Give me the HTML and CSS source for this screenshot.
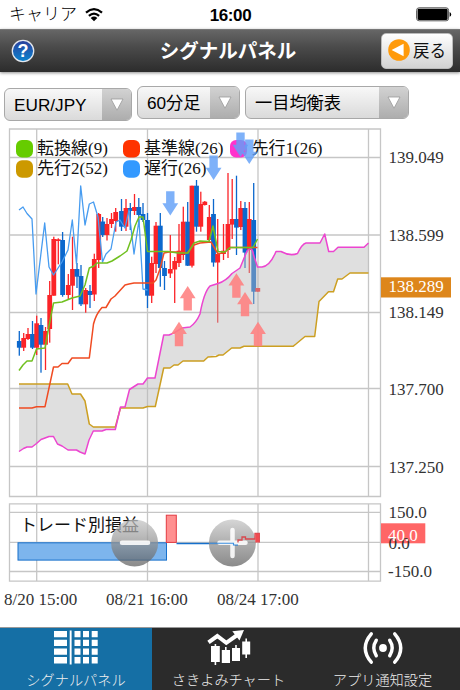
FILE: index.html
```html
<!DOCTYPE html>
<html lang="ja">
<head>
    <meta charset="UTF-8">
    <meta name="viewport" content="width=device-width, initial-scale=1.0">
    <title>シグナルパネル</title>
    <link rel="stylesheet" href="styles.css">
</head>
<body>
    <div class="app">
        <div class="status-bar">
            <div class="carrier">
                <span>キャリア</span>
                <svg width="18" height="14" viewBox="0 0 18 14">
                    <path d="M1 4.6Q9-2.2 17 4.6M3.9 7.9Q9 3.4 14.1 7.9" fill="none" stroke="#000" stroke-width="2.2"/>
                    <path d="M9 13.2L5.7 9.9Q9 7.2 12.3 9.9Z"/>
                </svg>
            </div>
            <div class="clock">16:00</div>
            <div class="battery">
                <svg width="36" height="15" viewBox="0 0 36 15">
                    <rect x=".6" y=".8" width="32" height="13" rx="2.5" fill="#fff" stroke="#555"/>
                    <rect x="1.6" y="1.7" width="30" height="11.2" rx="1.3"/>
                    <path d="M33.6 5q1.6.6 1.6 2.4t-1.6 2.4z"/>
                </svg>
            </div>
        </div>

        <header class="header">
            <svg class="help" width="24" height="24" viewBox="0 0 24 24">
                <defs>
                    <linearGradient id="helpFill" x1="0" y1="0" x2="0" y2="1">
                        <stop offset="0" stop-color="#2b3f9c"/>
                        <stop offset="1" stop-color="#0a84cf"/>
                    </linearGradient>
                </defs>
                <circle cx="12" cy="12" r="10.7" fill="url(#helpFill)" stroke="#e4e8ee" stroke-width="1.3"/>
                <text x="12" y="18.3" text-anchor="middle">?</text>
            </svg>
            <h1>シグナルパネル</h1>
            <button class="back" type="button">
                <svg width="22" height="22" viewBox="0 0 22 22">
                    <circle cx="11" cy="11" r="10.8" fill="#ff9a0a"/>
                    <path d="M3.6 11L15.6 4.8V17.2Z" fill="#fff"/>
                </svg>
                <span>戻る</span>
            </button>
        </header>

        <div class="selects">
            <div class="select pair"><span>EUR/JPY</span><i><svg width="14" height="13" viewBox="0 0 14 13"><path d="M1 1H13L7 12.2Z"/></svg></i></div>
            <div class="select foot"><span>60分足</span><i><svg width="14" height="13" viewBox="0 0 14 13"><path d="M1 1H13L7 12.2Z"/></svg></i></div>
            <div class="select tech"><span>一目均衡表</span><i><svg width="14" height="13" viewBox="0 0 14 13"><path d="M1 1H13L7 12.2Z"/></svg></i></div>
        </div>

        <svg class="chart" width="460" height="502" viewBox="0 125 460 502">
            <defs>
                <linearGradient id="btnFill" x1="0" y1="0" x2="0" y2="1">
                    <stop offset="0" stop-color="#c8c8c8" stop-opacity=".75"/>
                    <stop offset="1" stop-color="#585858" stop-opacity=".7"/>
                </linearGradient>
                <path id="up" d="M0 0L7.9 12.3H4.2V24.4H-4.2V12.3H-7.9Z"/>
                <path id="down" d="M0 0L7.9-12.3H4.2V-24.4H-4.2V-12.3H-7.9Z"/>
            </defs>

            <!-- grid -->
            <path class="grid" d="M9.5 129H380.5V496.5H9.5ZM9.5 157.5H380.5M9.5 235H380.5M9.5 312.5H380.5M9.5 388.5H380.5M9.5 466.5H380.5M36.7 129V496.5M147.5 129V496.5M258 129V496.5M368.5 129V496.5"/>
            <path class="grid" d="M9.5 503.8H380.5V581.2H9.5ZM9.5 512.3H380.5M9.5 542.4H380.5M9.5 571.5H380.5M36.7 503.8V581M147.5 503.8V581M258 503.8V581M368.5 503.8V581"/>

            <!-- legend -->
            <rect x="16" y="140" width="17" height="17.5" rx="6" fill="#66cc00"/>
            <rect x="123" y="140" width="17" height="17.5" rx="6" fill="#ff3300"/>
            <rect x="230" y="140" width="17" height="17.5" rx="6" fill="#ff33cc"/>
            <rect x="16" y="160.2" width="17" height="17.5" rx="6" fill="#cc9900"/>
            <rect x="123" y="160.2" width="17" height="17.5" rx="6" fill="#3399ff"/>
            <g class="label dark">
                <text x="37" y="153.5">転換線(9)</text>
                <text x="144" y="153.5">基準線(26)</text>
                <text x="251.5" y="153.5">先行1(26)</text>
                <text x="37" y="173.8">先行2(52)</text>
                <text x="144" y="173.8">遅行(26)</text>
            </g>

            <g id="candles"></g>

            <!-- cloud -->
            <path class="cloud" d="M19 384H67.7L72 394H80.5L85 401L89.3 424L93.3 427H115.3L120 407.5H125L129.5 389.5L138 384.3H143L147.5 378H155L163.7 335H173L182 328L190 327Q196 323 200 314Q204 292 210 286L218 283.5Q226 281 232 273.5L240 268L247 250H253L257.5 267H262Q270 266 276 251.5H281Q290 256.5 297.5 253.5Q302 244 306 243H320L324.7 234L328.7 251.5H333.5L338 247.3H364L368.5 243V273H350L341 279H337.5L333 291.7H328.5L319 301.5L314.7 336.5H305L296 344L293 346H244L240 348H231.7L223 355H216L207 357.5L203.7 361H183L178 365H174L170 368H163.7L155.3 406.5H147.5L146 408H120L115.3 429L111 428.7L102 431H93.3L89 438L85 453.5L80 452L76.5 450H68L62 446L57 444L53 437H49L41 439.5L32 447H27L19 451.5Z"/>
            <path class="line" stroke="#cc9f22" d="M19 384H67.7L72 394H80.5L85 401L89.3 424L93.3 427H115.3L120.5 408H143L147.5 406.5H155.3L163.7 368H170L174 365H178L183 361H203.7L208 357L216 356.5L219 355H223L231.7 348H240L244 346.3H293L296 344L305 336.5H314.7L319 301.5L328.5 291.7H333.5L337.7 279H342L350 273H368.5"/>
            <path class="line" stroke="#ec45d0" d="M19 451.5L23.5 448.5L27 447H32L36.5 443.5L41 439.5L49 436.5H53.5L57.5 444L62 446L68 450H76.5L80 452L85 454L89 440L93.3 431H102L106 429.5H115.3L120.5 407H125L129.5 389.5L138 384H143L147.5 378H155L163.7 335H169L174 333L182 328L190 327Q196 323 200 314Q204 292 210 286L218 283.5Q226 281 232 273.5L240 268L247 251Q252 245 253.5 255L257.5 267H262Q270 266 276 251.5H281Q290 256.5 297.5 253.5Q302 244 306 243H320L324.7 234L328.7 251.5H333.5L338 247.3H364L368.5 243"/>

            <!-- chikou / kijun / tenkan -->
            <path class="line thin" stroke="#479cf0" d="M19 210L23 207L27 213.5L32 219L36 294L44.7 223L49 267L53.5 275L62 262L68 250L72.3 220L76.5 264L80.7 186L85 225L89.3 204L93.5 202L98 217L102.5 262L106 254L111 249L116 222L120 220L125 228L129 210L134 254L139 220L143 289L147.5 290"/>
            <path class="line" stroke="#f04b22" d="M19 408H32L36.5 406.7H45L53.5 367H58L62 363.5H68L72 358H89.3L93.5 324Q96 314 102 307.5H106L111 299L115 296L125 285L129 284L134 283H153L156 280L160 269L164 253L169 252H178L187 253L194 245L200 243L211 242L218 254L225 252L230 247.5H257.5"/>
            <path class="line" stroke="#70c020" d="M19 370.5L23 365L27 361H32L36.5 349L45 348L49 326L53.5 303L62 302L72 298L80 296L85 285L89.3 268L94 266L97 263H107L112 261L120 256L127 251L131 240L135 226L139 217L143 217L147.5 251.5H168L178 253L188 253L194 243L200 241L209 241.5L213 226L218 251.5L225 252L230 247.5H253L257.5 239"/>

            <!-- signals -->
            <g fill="#62a0f8" fill-opacity=".82">
                <use href="#down" x="170.3" y="215.6"/>
                <use href="#down" x="213.6" y="180"/>
                <use href="#down" x="240.5" y="157"/>
                <use href="#down" x="249.3" y="164"/>
            </g>
            <g fill="#ff7f7f" fill-opacity=".88">
                <use href="#up" x="179" y="321.8"/>
                <use href="#up" x="187.7" y="286"/>
                <use href="#up" x="236.4" y="273.3"/>
                <use href="#up" x="245" y="291.9"/>
                <use href="#up" x="258" y="321.8"/>
            </g>

            <!-- price axis -->
            <rect x="381" y="277.3" width="70" height="20.2" fill="#dd861b"/>
            <g class="label">
                <text x="388.5" y="163">139.049</text>
                <text x="388.5" y="240.5">138.599</text>
                <text x="388.5" y="318.3">138.149</text>
                <text x="388.5" y="395">137.700</text>
                <text x="388.5" y="472.5">137.250</text>
                <text x="388.5" y="291.8" class="now">138.289</text>
            </g>

            <!-- profit and loss per trade -->
            <text class="label dark" x="20" y="530.5">トレード別損益</text>
            <rect x="18" y="542.8" width="148.5" height="17.3" fill="#7db5ed" stroke="#1670cc"/>
            <rect x="166.3" y="515.2" width="10" height="27.2" fill="#ff9090" stroke="#e33b42"/>
            <path d="M176.5 543.5H233.5V545H238" fill="none" stroke="#1670cc" stroke-width="1.4"/>
            <rect x="381" y="523.3" width="44.3" height="20" fill="#ff6666"/>
            <g class="label">
                <text x="388.5" y="518">150.0</text>
                <text x="388.5" y="548.5">0.0</text>
                <text x="388" y="577">-150.0</text>
                <text x="388" y="540.5" class="now">40.0</text>
                <text x="4" y="605">8/20 15:00</text>
                <text x="106" y="605">08/21 16:00</text>
                <text x="217" y="605">08/24 17:00</text>
            </g>

            <!-- zoom buttons -->
            <circle cx="134.6" cy="543" r="23.5" fill="url(#btnFill)"/>
            <path class="sign" d="M122 542.8H148"/>
            <circle cx="232.4" cy="543" r="23.5" fill="url(#btnFill)"/>
            <path class="sign" d="M219.5 542.8H245.5M232.5 530V556"/>
            <path d="M210 543.2H233.5V545H238" fill="none" stroke="#3c8fe0" stroke-width="1.1"/>
            <path d="M238 542.4V540H242V537H245.5V539H255V533.5H259.3V542.4" fill="none" stroke="#d8484e" stroke-width="1.3"/>
            <rect x="255.3" y="533.5" width="4" height="9" fill="#f04a50"/>
        </svg>

        <nav class="tabs">
            <div class="tab active">
                <svg width="44" height="34" viewBox="0 0 44 34">
                    <path d="M0 0H13V6.3H0ZM0 8.7H13V15H0ZM0 17.4H13V23.7H0ZM0 26.1H13V32.4H0ZM15.7-.5H17.6V33.5H15.7ZM20.5 0H26.5V6.3H20.5ZM29 0H35V6.3H29ZM37.7 0H43.7V6.3H37.7ZM20.5 8.7H26.5V15H20.5ZM29 8.7H35V15H29ZM37.7 8.7H43.7V15H37.7ZM20.5 17.4H26.5V23.7H20.5ZM29 17.4H35V23.7H29ZM37.7 17.4H43.7V23.7H37.7ZM20.5 26.1H26.5V32.4H20.5ZM29 26.1H35V32.4H29ZM37.7 26.1H43.7V32.4H37.7Z" fill="#fff"/>
                </svg>
                <span>シグナルパネル</span>
            </div>
            <div class="tab">
                <svg width="44" height="36" viewBox="0 0 44 36">
                    <path d="M1.5 12.3L10.3 6L19.3 12.8L31 4.5" fill="none" stroke="#fff" stroke-width="4"/>
                    <path d="M25.3 1.2L37 0L32.5 10.6Z" fill="#fff"/>
                    <path d="M4 16H7.6V14H9.2V16H12.8V32H9.2V35H7.6V32H4ZM14.8 20H18V17H19.6V20H23V33H14.8ZM25 18H28.2V15H29.8V18H33V31H25ZM35.2 11.5H38.4V8.5H40V11.5H43.2V24.5H40V28H38.4V24.5H35.2Z" fill="#fff"/>
                </svg>
                <span>さきよみチャート</span>
            </div>
            <div class="tab">
                <svg width="40" height="34" viewBox="0 0 40 34">
                    <circle cx="20" cy="17" r="3.9" fill="#fff"/>
                    <path d="M13.3 9.3Q8.3 17 13.3 24.7M26.7 9.3Q31.7 17 26.7 24.7M8.3 2.8Q-3.8 17 8.3 31.2M31.7 2.8Q43.8 17 31.7 31.2" fill="none" stroke="#fff" stroke-width="3.4" stroke-linecap="round"/>
                </svg>
                <span>アプリ通知設定</span>
            </div>
        </nav>
    </div>

    <script>
        // x, wick top, wick bottom, body top, body bottom, color
        const candles = [
            [19.3, 331, 355.7, 341, 347.7, "b"],
            [23.7, 333, 351, 338, 347.7, "r"],
            [28, 328, 340, 334, 339, "r"],
            [32.5, 321, 349, 334, 347.7, "b"],
            [36.7, 315.7, 355, 323.3, 347.7, "r"],
            [41, 318, 372.7, 325, 344.7, "b"],
            [45.5, 327, 370, 331, 344.7, "r"],
            [49.7, 281, 342.7, 295, 329, "r"],
            [53.8, 236.7, 295.7, 239, 295.7, "r"],
            [58.3, 238.3, 264.3, 239.3, 241, "r"],
            [62.6, 232, 296.7, 240, 295, "b"],
            [68.3, 274, 300, 285, 295, "r"],
            [72.5, 236.7, 310, 269, 285.7, "r"],
            [77, 263, 288, 269, 276.7, "b"],
            [81, 265, 306, 276, 304.3, "b"],
            [85.7, 288, 312.7, 290, 304.3, "r"],
            [90, 285, 308, 291, 295, "b"],
            [94.3, 253.7, 301, 259, 294.5, "r"],
            [98.7, 213, 268, 214, 260, "r"],
            [102.7, 217, 237, 221.5, 235, "b"],
            [107, 218, 240.5, 224, 235, "r"],
            [111.5, 213, 228, 219, 224, "r"],
            [115.7, 208, 231.7, 212, 221, "r"],
            [121.5, 199, 231, 211, 226.7, "b"],
            [126, 199, 231, 208, 226.7, "r"],
            [130.3, 203, 230, 208, 211, "b"],
            [134.5, 194, 215, 207, 211, "r"],
            [138.8, 198, 225, 207, 215, "b"],
            [143, 203, 222, 214, 220, "b"],
            [147.5, 213, 308, 220, 295.7, "b"],
            [151.7, 256.7, 303, 263, 295.7, "r"],
            [156, 222, 273, 225.7, 264, "r"],
            [160.3, 213, 286.7, 225.7, 268, "b"],
            [164.5, 261, 290, 268, 276, "b"],
            [170.3, 235, 278, 269, 273.5, "r"],
            [174.7, 257, 303, 261, 269.5, "r"],
            [179, 224, 267, 250.7, 263, "r"],
            [183.3, 206.7, 260, 221.7, 255, "r"],
            [187.7, 202, 266, 221.7, 265.7, "b"],
            [192, 185.7, 267.5, 185.7, 265.7, "r"],
            [196.5, 180, 231.7, 185.7, 226.7, "b"],
            [200.8, 191.7, 231.7, 204, 226.7, "r"],
            [204.8, 201, 205.5, 201.7, 205, "r"],
            [209.3, 205, 243, 217, 240, "r"],
            [213.5, 199, 266.7, 214, 262.5, "b"],
            [217.7, 219, 322.7, 254, 262.5, "r"],
            [223.5, 224, 260, 250.7, 254, "r"],
            [228, 173, 258, 224, 250, "r"],
            [232.2, 179, 239, 219, 224.6, "r"],
            [236.5, 175.7, 255, 219, 227.6, "b"],
            [240.8, 201, 230, 208, 227, "r"],
            [245, 202, 268, 208, 252.6, "b"],
            [249.3, 202, 273, 219, 250, "r"],
            [253.7, 183, 304, 220, 291.7, "b"],
            [257.8, 288, 291.7, 288, 291.7, "r"]
        ];
        const colors = { r: "#fb2428", b: "#0c68cd" };
        let html = "";
        candles.forEach(([x, high, low, top, bottom, c]) => {
            html += `<rect x="${x - 0.65}" y="${high}" width="1.3" height="${low - high}" fill="${colors[c]}"/>`;
            html += `<rect x="${x - 2.4}" y="${top}" width="4.8" height="${bottom - top}" fill="${colors[c]}"/>`;
        });
        document.getElementById("candles").innerHTML = html;
    </script>
</body>
</html>
```
FILE: styles.css
```css
body {
    margin: 0;
    background: #fff;
    font-family: "Liberation Sans", "Noto Sans CJK JP", sans-serif;
    color: #000;
}
.app {
    width: 460px;
    height: 690px;
    display: flex;
    flex-direction: column;
    overflow: hidden;
}
.status-bar {
    height: 29px;
    display: grid;
    grid-template-columns: 1fr auto 1fr;
    align-items: center;
    padding: 0 8px 0 9px;
    box-sizing: border-box;
}
.carrier {
    display: flex;
    align-items: center;
    gap: 8px;
    font-size: 17px;
    font-weight: 300;
    line-height: 29px;
}
.clock {
    font-size: 17px;
    font-weight: bold;
    letter-spacing: -0.4px;
    padding-top: 2px;
}
.battery {
    display: flex;
    justify-content: flex-end;
}
.header {
    height: 43px;
    flex: none;
    display: grid;
    grid-template-columns: 80px 1fr 80px;
    align-items: center;
    padding: 0 7px 0 11px;
    box-sizing: border-box;
    background: linear-gradient(#666, #4b4b4b 40%, #2c2c2c);
    border-top: 1px solid #777;
    box-shadow: 0 1px 3px rgba(0, 0, 0, 0.45);
}
.help text {
    font-size: 18px;
    font-weight: bold;
    fill: #fff;
}
.header h1 {
    margin: 0;
    font-size: 19.5px;
    line-height: 40px;
    font-weight: bold;
    text-align: center;
    color: #fff;
    white-space: nowrap;
    padding-right: 8px;
}
.back {
    justify-self: end;
    width: 72px;
    height: 36px;
    display: flex;
    align-items: center;
    gap: 3px;
    padding: 0 5px 2px 6px;
    border: 1px solid #bbb;
    border-radius: 5px;
    background: linear-gradient(#fff, #d2d2d2);
    font-family: inherit;
    font-size: 16.5px;
    white-space: nowrap;
    color: #111;
}
.back svg {
    flex: none;
}
.selects {
    height: 53px;
    display: flex;
    align-items: flex-start;
    gap: 5px;
    padding: 14px 4px 0;
    box-sizing: border-box;
}
.select {
    height: 33px;
    display: flex;
    box-sizing: border-box;
    border: 1px solid #a8a8a8;
    border-radius: 6px;
    overflow: hidden;
    background: linear-gradient(#f8f8f8, #dadada);
    font-size: 17.2px;
    line-height: 32px;
}
.select span {
    flex: 1;
    padding-left: 9px;
    white-space: nowrap;
}
.select i {
    width: 29px;
    display: flex;
    align-items: center;
    justify-content: center;
    background: linear-gradient(#d2d2d2, #adadad);
}
.select path {
    fill: #fff;
    stroke: #999;
    stroke-width: 0.8;
}
.pair {
    width: 128px;
    margin-top: 2px;
}
.foot {
    width: 103px;
}
.tech {
    width: 164px;
}
.chart {
    display: block;
    flex: none;
}
.grid {
    fill: none;
    stroke: #c6c6c6;
    stroke-width: 1.3;
}
.label {
    font-family: "Liberation Serif", "Noto Sans CJK JP", serif;
    font-size: 17px;
    fill: #333;
}
.dark {
    fill: #111;
}
.now {
    fill: #fff;
}
.cloud {
    fill: #b8b8b8;
    fill-opacity: 0.45;
}
.line {
    fill: none;
    stroke-width: 1.5;
    stroke-linejoin: round;
}
.thin {
    stroke-width: 1.3;
}
.sign {
    fill: none;
    stroke: #fff;
    stroke-width: 4.5;
    stroke-linecap: round;
    stroke-opacity: 0.88;
}
.tabs {
    height: 63px;
    flex: none;
    display: grid;
    grid-template-columns: 152px 153px 155px;
    background: #2b2b2b;
    border-top: 1px solid #999;
    box-sizing: border-box;
}
.tab {
    display: flex;
    flex-direction: column;
    align-items: center;
    color: #eee;
    font-size: 14.2px;
    font-weight: 300;
}
.tab svg {
    height: 36px;
    margin-top: 2px;
    overflow: visible;
}
.tab span {
    line-height: 28px;
    white-space: nowrap;
}
.active {
    background: #156fa5;
}
```
